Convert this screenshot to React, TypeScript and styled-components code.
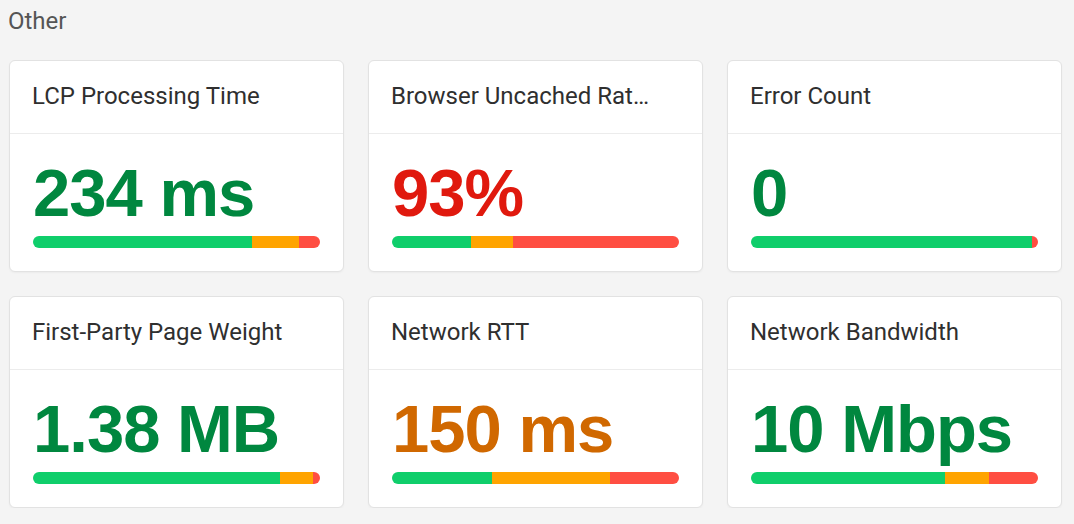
import React from 'react';
import styled, { createGlobalStyle } from 'styled-components';

// Types
type Rating = 'good' | 'average' | 'poor';

interface Metric {
  title: string;
  value: string;
  rating: Rating;
  // share of the distribution bar, in percent
  dist: [number, number, number];
}

const metrics: Metric[] = [
  { title: 'LCP Processing Time', value: '234 ms', rating: 'good', dist: [76.3, 16.4, 7.3] },
  { title: 'Browser Uncached Ratio', value: '93%', rating: 'poor', dist: [27.5, 14.6, 57.9] },
  { title: 'Error Count', value: '0', rating: 'good', dist: [97.9, 0, 2.1] },
  { title: 'First-Party Page Weight', value: '1.38 MB', rating: 'good', dist: [86.1, 11.5, 2.4] },
  { title: 'Network RTT', value: '150 ms', rating: 'average', dist: [34.8, 41.1, 24.1] },
  { title: 'Network Bandwidth', value: '10 Mbps', rating: 'good', dist: [67.6, 15.4, 17] },
];

const valueColors: Record<Rating, string> = {
  good: '#00873f',
  average: '#d06800',
  poor: '#e0190e',
};

const barColors = ['#0fce6b', '#ffa400', '#ff4e42'];

// Styled Components
const GlobalStyle = createGlobalStyle`
  html, body {
    margin: 0;
    background: #f4f4f4;
  }
`;

const Page = styled.div`
  padding: 7px 12px 0 9px;
  font-family: Roboto, "Liberation Sans", sans-serif;
`;

const SectionTitle = styled.h2`
  margin: 0 0 25px -1px;
  font-size: 24px;
  font-weight: 400;
  line-height: 28px;
  color: #555;
`;

const Grid = styled.div`
  display: grid;
  grid-template-columns: repeat(3, 335px);
  gap: 24px;
`;

const Card = styled.section`
  background: #fff;
  border: 1px solid #e2e2e2;
  border-radius: 6px;
  box-shadow: 0 1px 2px rgba(0, 0, 0, 0.04);
  overflow: hidden;
`;

const CardHeader = styled.header`
  padding: 21px 50px 23px 22px;
  border-bottom: 1px solid #ececec;
`;

const CardTitle = styled.h3`
  margin: 0;
  font-size: 24px;
  font-weight: 400;
  line-height: 28px;
  color: #2f2f2f;
  white-space: nowrap;
  overflow: hidden;
  text-overflow: ellipsis;
`;

const CardBody = styled.div`
  padding: 24px 23px 23px;
`;

const Value = styled.div<{ $rating: Rating }>`
  font-family: "Liberation Sans", Arial, sans-serif;
  font-size: 67px;
  font-weight: 700;
  line-height: 70px;
  letter-spacing: -1px;
  color: ${({ $rating }) => valueColors[$rating]};
  white-space: nowrap;
`;

const Bar = styled.div`
  display: flex;
  height: 12px;
  margin-top: 8px;
  border-radius: 6px;
  overflow: hidden;
`;

const Segment = styled.div<{ $tone: number }>`
  height: 100%;
  background: ${({ $tone }) => barColors[$tone]};
`;

const MetricCard: React.FC<{ metric: Metric }> = ({ metric }) => (
  <Card>
    <CardHeader>
      <CardTitle>{metric.title}</CardTitle>
    </CardHeader>
    <CardBody>
      <Value $rating={metric.rating}>{metric.value}</Value>
      <Bar>
        {metric.dist.map((share, i) =>
          share > 0 ? <Segment key={i} $tone={i} style={{ width: `${share}%` }} /> : null
        )}
      </Bar>
    </CardBody>
  </Card>
);

export default function App() {
  return (
    <Page>
      <GlobalStyle />
      <SectionTitle>Other</SectionTitle>
      <Grid>
        {metrics.map((m) => (
          <MetricCard key={m.title} metric={m} />
        ))}
      </Grid>
    </Page>
  );
}
